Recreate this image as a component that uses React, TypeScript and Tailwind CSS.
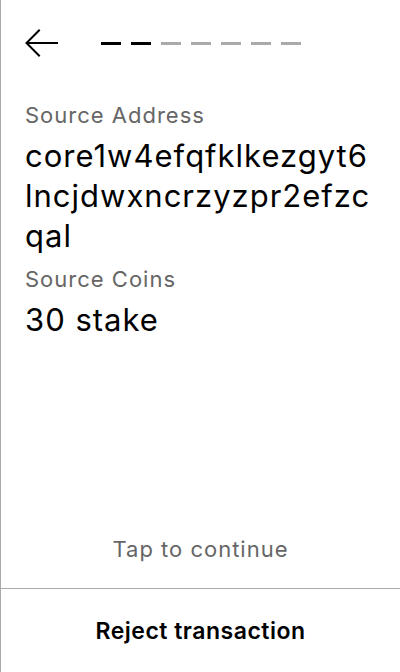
import React from "react";

function BackArrow() {
    return (
        <svg width="34" height="28" viewBox="0 0 34 28" fill="none" stroke="#000" strokeWidth="2" strokeLinecap="square">
            <path d="M32 14H2" />
            <path d="M14 1.5L1.5 14L14 26.5" />
        </svg>
    )
}

function Steps({ total, done }: { total: number; done: number }) {
    return (
        <div className="flex items-center gap-[10px]">
            {Array.from({ length: total }).map((_, i) => (
                <div key={i} className={i < done ? "h-[3px] w-5 bg-black" : "h-[3px] w-5 bg-[#aaaaaa]"} />
            ))}
        </div>
    )
}

export default function App() {
    return (
        <div className="flex h-[672px] w-[400px] flex-col border-l border-[#aaaaaa] bg-white text-black" style={{ fontFamily: "Inter, 'Noto Sans', sans-serif" }}>
            <div className="flex h-[86px] items-center pl-6">
                <BackArrow />
                <div className="ml-[42px]">
                    <Steps total={7} done={2} />
                </div>
            </div>

            <div className="px-6 pt-[15px]">
                <p className="text-[22px] leading-[28px] tracking-[1px] text-[#666666]">Source Address</p>
                <p className="mt-[7px] break-all text-[31px] leading-[40px] tracking-[1px]">core1w4efqfklkezgyt6lncjdwxncrzyzpr2efzcqal</p>
                <p className="mt-[9px] text-[22px] leading-[28px] tracking-[1px] text-[#666666]">Source Coins</p>
                <p className="mt-[7px] text-[31px] leading-[40px] tracking-[1px]">30 stake</p>
            </div>

            <div className="flex-1" />

            <p className="pb-[25px] text-center text-[22px] leading-[28px] tracking-[1px] text-[#666666]">Tap to continue</p>
            <button className="h-[84px] w-full border-t border-[#aaaaaa] text-center text-[23px] leading-[28px] font-semibold tracking-[0.5px]">Reject transaction</button>
        </div>
    )
}
